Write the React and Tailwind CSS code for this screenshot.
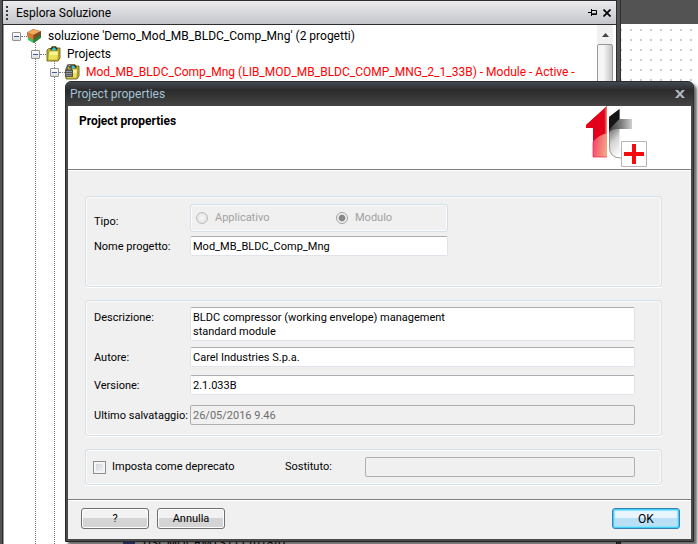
const ui = "font-[Roboto,Arial,sans-serif]";
const field =
  "block w-full rounded-[2px] border border-[#e2e3ea] border-t-[#abadb3] bg-white px-[2px] text-[11px] leading-[14px] text-black outline-none";
const fieldOff =
  "block h-5 w-full rounded-[2px] border border-[#afafaf] bg-[#f0f0f0] px-[2px] text-[11px] leading-[14px] text-[#6d6d6d] outline-none";
const group =
  "rounded-[3px] border border-[#d5dfe5] shadow-[inset_0_0_0_1px_#fbfbfb,0_1px_0_#fff]";
const button =
  "h-[21px] w-[68px] rounded-[3px] border border-[#707070] bg-linear-to-b from-[#f2f2f2] from-50% to-[#d4d4d4] to-50% text-[11px] leading-[18px] text-black shadow-[inset_0_0_0_1px_#fcfcfc]";

function Toggle() {
  return (
    <button
      type="button"
      aria-label="Collapse"
      className="flex size-[9px] shrink-0 items-center justify-center rounded-[1px] border border-[#919191] bg-linear-to-b from-white to-[#dcdcdc]"
    >
      <span className="h-px w-[5px] bg-[#3a5a9a]" />
    </button>
  );
}

function Dots() {
  return <span className="w-[6px] shrink-0 border-t border-dotted border-[#777]" />;
}

function CubeIcon() {
  return (
    <svg width="14" height="14" viewBox="0 0 14 14" className="shrink-0" aria-hidden="true">
      <path d="M0 3.5 6 0l8 2.2v6.3L7 14 1 10z" fill="#6f4a2c" />
      <path d="M0.3 3.5 6 0.2l7.6 2L6.6 6z" fill="#f5a95c" />
      <path d="M0.3 3.5 6.6 6v5L1 8.4z" fill="#d87932" />
      <path d="M1 8.4 6.6 10.8V14L1 11z" fill="#3fc45a" />
      <path d="M6.6 6l7-3.8v3.6L6.6 10.8z" fill="#7c4b27" />
      <path d="M6.6 10.8l7-5v3.2l-7 5z" fill="#23863a" />
    </svg>
  );
}

function FolderIcon({ locked }) {
  return (
    <svg width="15" height="16" viewBox="0 0 15 16" className="shrink-0" aria-hidden="true">
      <path d="M1 4 3 2.500h2l1-2h4l1 1.500h3v10l-2 3H1z" fill="#c9b92a" stroke="#5d5312" strokeWidth=".8" />
      <path d="M4.500 4.500V2.500l2-1.500h3l2 1.500v2z" fill="#242a1c" />
      <path d="M8 1 11 4H9v1.500H7V4H5z" fill="#39c4d4" />
      <path d="M2.500 6 4 4.800h8.800L11.800 14.200H1.800z" fill="#ece25a" stroke="#8a7c1a" strokeWidth=".6" />
      <path d="M4 5.800h7.800l-.4 3.200H3.400z" fill="#f9f49c" />
      {locked && (
        <g>
          <path d="M2.200 6V2.800a2 2 0 0 1 4 0V6" fill="none" stroke="#5a5c60" strokeWidth="1.500" />
          <path d="M0 5.500h8v7.500H0z" fill="#505257" />
          <path d="M1 7.500h6M1 9.500h6M1 11.300h6" stroke="#a8aaae" strokeWidth=".8" />
        </g>
      )}
    </svg>
  );
}

function Logo() {
  return (
    <svg width="62" height="62" viewBox="0 0 62 62" role="img" aria-label="1t">
      <defs>
        <linearGradient id="pink" x1="0" y1="0.600" x2="1" y2="1">
          <stop offset="0.300" stopColor="#f5406a" />
          <stop offset="1" stopColor="#f5b184" />
        </linearGradient>
        <linearGradient id="tip" x1="0" y1="0" x2="1" y2="0">
          <stop offset="0" stopColor="#e2001a" />
          <stop offset="1" stopColor="#f08c78" />
        </linearGradient>
        <linearGradient id="bar" x1="0" y1="0" x2="1" y2="0">
          <stop offset="0" stopColor="#3a3a3a" />
          <stop offset="0.500" stopColor="#777" />
          <stop offset="1" stopColor="#d0d0d0" />
        </linearGradient>
        <linearGradient id="stem" x1="0" y1="0" x2="0.400" y2="1">
          <stop offset="0.450" stopColor="#8c8c8c" />
          <stop offset="0.650" stopColor="#d4d4d4" />
          <stop offset="1" stopColor="#ffffff" />
        </linearGradient>
      </defs>
      <path d="M21 0v51H7V22H0v-3z" fill="url(#pink)" />
      <path d="M21 0v27C14 29 10 32 7 36V22H0v-3z" fill="#e2001a" />
      <path d="M18 3 21 0v27l-2 .7z" fill="url(#tip)" />
      <path d="M7 36v15h14" fill="none" stroke="#f0305a" strokeWidth=".8" />
      <path d="M33.500 3v36c0 5 3 7 9 7v6H35q-12 0-12-11V11z" fill="url(#stem)" />
      <path d="M23.500 24v17q0 11 11.500 11h3" fill="none" stroke="#888" strokeWidth=".8" />
      <path d="M33.500 3v12C29 17 26 21 23 25V11z" fill="#151515" />
      <path d="M33.500 13H46v10H31c-4 0-6 1-8 4v-2c3-4 6-8 10.500-12z" fill="url(#bar)" />
      <path d="M35.500 35.500h25v25h-25z" fill="#fff" stroke="#b5b5b5" />
      <path d="M48 38v20M38 48h20" stroke="#f40b10" strokeWidth="4" />
    </svg>
  );
}

function Tree() {
  return (
    <div className="relative flex min-w-0 grow flex-col overflow-hidden bg-white pt-[2px] text-[12px] whitespace-nowrap text-black">
      <span className="absolute top-4 bottom-0 left-[31px] border-l border-dotted border-[#777]" />
      <span className="absolute top-9 bottom-0 left-[50px] border-l border-dotted border-[#777]" />
      <div className="flex h-[18px] shrink-0 items-center pl-2">
        <Toggle />
        <Dots />
        <CubeIcon />
        <span className="pl-[7px]">soluzione 'Demo_Mod_MB_BLDC_Comp_Mng' (2 progetti)</span>
      </div>
      <div className="relative flex h-[18px] shrink-0 items-center pl-[27px]">
        <Toggle />
        <Dots />
        <FolderIcon />
        <span className="pl-[6px]">Projects</span>
      </div>
      <div className="relative flex h-[18px] shrink-0 items-center pl-[46px]">
        <Toggle />
        <Dots />
        <FolderIcon locked />
        <span className="pl-[6px] text-[#ff0000]">
          Mod_MB_BLDC_Comp_Mng (LIB_MOD_MB_BLDC_COMP_MNG_2_1_33B) - Module - Active -
        </span>
      </div>
      <div className="mt-auto -mb-2 flex h-[18px] shrink-0 items-center gap-2 pl-[119px]">
        <span className="h-4 w-3 bg-[#4a62b8]" />
        <span>DSI_MOI_RMTS111 (018A)</span>
      </div>
    </div>
  );
}

function Dialog() {
  return (
    <div
      role="dialog"
      aria-labelledby="dialog-title"
      className="absolute top-[81px] right-1 left-[65px] rounded-t-[6px] border border-[#2a2a2a] bg-[#4a4a4a] px-[2px] pb-[2px] shadow-[3px_3px_3px_#0009]"
    >
      <div className="-mx-[2px] flex h-6 items-center justify-between rounded-t-[5px] bg-linear-to-b from-[#434852] from-0% via-[#2b2b2b] via-35% to-[#454545] pr-2 pl-1">
        <h1 id="dialog-title" className="text-[12px] leading-4 text-[#a3c3d6]">
          Project properties
        </h1>
        <button type="button" aria-label="Close" className="flex size-[10px] items-center justify-center">
          <svg width="10" height="10" viewBox="0 0 10 10" aria-hidden="true">
            <path d="M0 1h3l2 2.500L7 1h3L6.500 5 10 9H7L5 6.500 3 9H0l3.500-4z" fill="#aeb6c4" />
          </svg>
        </button>
      </div>
      <div className={`${ui} bg-[#f0f0f0] text-[11px] leading-[14px] text-black`}>
        <header className="flex h-16 items-start justify-between border-b border-[#808080] bg-white pr-[43px] pl-[11px]">
          <h2 className="pt-2 text-[12px] font-bold">Project properties</h2>
          <Logo />
        </header>
        <div className="flex flex-col gap-[13px] border-t border-white px-[17px] pt-[25px] pr-[29px] pb-[14px]">
          <section className={`${group} grid h-[91px] grid-cols-[96px_1fr] content-start gap-y-1 pt-[7px] pr-[26px] pl-2`}>
            <span id="tipo" className="pt-[11px]">Tipo:</span>
            <div
              role="radiogroup"
              aria-labelledby="tipo"
              className="flex h-7 w-[258px] items-center rounded-[3px] border border-[#d5dfe5] pl-[5px] text-[#a0a0a0] shadow-[inset_0_0_0_1px_#fbfbfb]"
            >
              <label className="flex w-[140px] items-center gap-[7px]">
                <input
                  type="radio"
                  name="tipo"
                  disabled
                  className="size-3 appearance-none rounded-full border border-[#bcbcbc] bg-radial from-[#f8f8f8] to-[#dcdcdc]"
                />
                Applicativo
              </label>
              <label className="flex items-center gap-[7px]">
                <input
                  type="radio"
                  name="tipo"
                  disabled
                  defaultChecked
                  className="size-3 appearance-none rounded-full border border-[#a0a0a0] bg-radial from-[#888] from-40% to-[#f4f4f4] to-55%"
                />
                Modulo
              </label>
            </div>
            <label htmlFor="nome" className="pt-1">Nome progetto:</label>
            <div className="w-[258px]">
              <input id="nome" defaultValue="Mod_MB_BLDC_Comp_Mng" className={`${field} h-5`} />
            </div>
          </section>
          <section className={`${group} grid h-[136px] grid-cols-[96px_1fr] grid-rows-[32px_20px_22px_20px] content-start gap-y-2 pt-[6px] pr-[26px] pl-2`}>
            <label htmlFor="descrizione" className="pt-1">Descrizione:</label>
            <textarea
              id="descrizione"
              defaultValue={"BLDC compressor (working envelope) management\nstandard module"}
              className={`${field} h-[34px] resize-none overflow-hidden pt-[3px] leading-[13px]`}
            />
            <label htmlFor="autore" className="pt-1">Autore:</label>
            <input id="autore" defaultValue="Carel Industries S.p.a." className={`${field} h-5`} />
            <label htmlFor="versione" className="pt-1">Versione:</label>
            <input id="versione" defaultValue="2.1.033B" className={`${field} h-5`} />
            <label htmlFor="ultimo" className="pt-1 whitespace-nowrap">Ultimo salvataggio:</label>
            <input id="ultimo" readOnly defaultValue="26/05/2016 9.46" className={fieldOff} />
          </section>
          <section className={`${group} flex h-9 items-center pr-[26px] pl-[7px]`}>
            <label className="flex w-48 items-center gap-[6px]">
              <input
                type="checkbox"
                className="size-[13px] appearance-none border border-[#8e8f8f] bg-linear-to-br from-[#cbcfd5] to-[#f6f6f6] shadow-[inset_0_0_0_2px_#f4f4f4]"
              />
              Imposta come deprecato
            </label>
            <label htmlFor="sostituto" className="w-20">Sostituto:</label>
            <div className="grow">
              <input id="sostituto" readOnly className={fieldOff} />
            </div>
          </section>
        </div>
        <footer className="flex h-10 items-start gap-2 border-t border-[#808080] pt-2 pr-[11px] pl-[13px] shadow-[inset_0_1px_0_#fff]">
          <button type="button" className={button}>?</button>
          <button type="button" className={button}>Annulla</button>
          <button
            type="button"
            className="ml-auto h-[21px] w-[68px] rounded-[3px] border border-[#3c7fb1] bg-linear-to-b from-[#e8f5fc] from-50% to-[#b9e0f6] to-50% text-[12px] leading-[18px] text-black shadow-[inset_0_0_0_1px_#3fd0fb,inset_0_0_1px_2px_#8fe3fc]"
          >
            OK
          </button>
        </footer>
      </div>
    </div>
  );
}

export default function App() {
  return (
    <div className="relative flex h-screen min-h-[544px] overflow-hidden bg-[#535353] font-[Roboto,'Noto_Sans',sans-serif]">
      <main className="ml-[2px] flex min-w-0 grow flex-col border border-b-0 border-[#2d2d30]">
        <div className="flex h-6 shrink-0 items-center border-b border-[#2d2d30] bg-linear-to-b from-[#ececee] to-[#c3c5ca] pr-[5px] pl-[3px]">
          <span className="h-[14px] border-l-2 border-dotted border-[#3a3a3a]" />
          <h2 className="grow pl-2 text-[12px]">Esplora Soluzione</h2>
          <button type="button" aria-label="Pin" className="mr-[6px]">
            <svg width="9" height="8" viewBox="0 0 9 8" aria-hidden="true">
              <path d="M0 3.500h3M3.500 0v7M4 1.500h4.500v4H4M4 4.800h4.500" fill="none" stroke="#000" />
            </svg>
          </button>
          <button type="button" aria-label="Close">
            <svg width="8" height="8" viewBox="0 0 8 8" aria-hidden="true">
              <path d="m.5.5 7 7m0-7-7 7" stroke="#000" strokeWidth="1.700" />
            </svg>
          </button>
        </div>
        <div className="flex min-h-0 grow border-l border-[#9a9a9a]">
          <Tree />
          <div className="flex w-[19px] shrink-0 flex-col bg-white pr-[3px]">
            <button type="button" aria-label="Scroll up" className="flex h-[19px] shrink-0 items-center justify-center bg-[#f0f0f0]">
              <svg width="7" height="4" viewBox="0 0 7 4" aria-hidden="true">
                <path d="M3.500 0 7 4H0z" fill="#444" />
              </svg>
            </button>
            <div className="h-80 rounded-[2px] border border-[#979797] bg-linear-to-r from-[#f5f5f5] from-40% to-[#c4c4c8]" />
          </div>
        </div>
      </main>
      <aside className="ml-[3px] flex w-[78px] shrink-0 flex-col border-l border-[#2d2d30] pt-6">
        <div className="grow bg-white bg-[radial-gradient(#aaa_0.5px,transparent_1px)] bg-size-[10px_10px] [background-position:5px_1px]" />
      </aside>
      <Dialog />
    </div>
  );
}
